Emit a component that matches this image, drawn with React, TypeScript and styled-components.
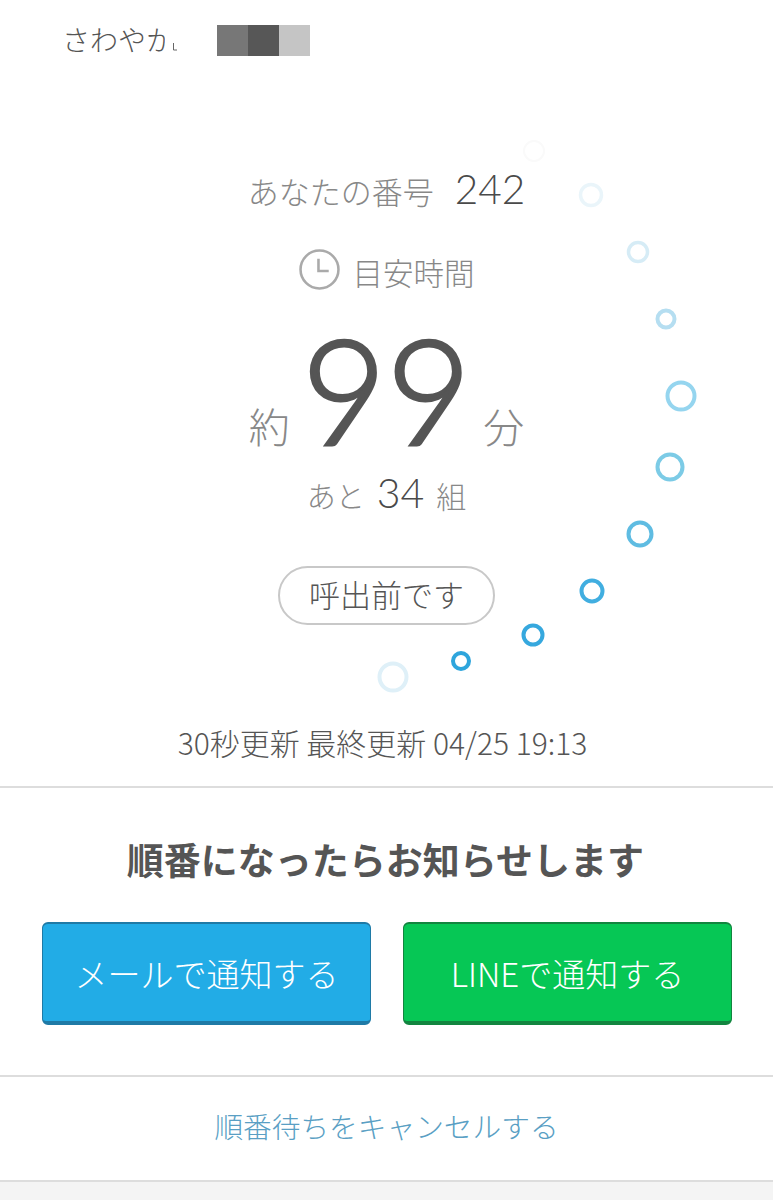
import React from 'react';
import styled, { createGlobalStyle } from 'styled-components';

const GlobalStyle = createGlobalStyle`
  html, body {
    margin: 0;
    padding: 0;
    background: #f4f4f4;
  }
  body {
    font-family: "Noto Sans CJK JP", "Noto Sans", sans-serif;
  }
`;

const Page = styled.div`
  width: 773px;
  height: 1200px;
  overflow: hidden;
  background: #f4f4f4;
`;

const Header = styled.div`
  height: 80px;
  padding: 25px 0 0 62px;
  box-sizing: border-box;
  display: flex;
  align-items: flex-start;
  background: #fff;
`;

const ShopName = styled.div`
  width: 155px;
  display: flex;
  align-items: flex-start;
`;

const ShopNameText = styled.div`
  width: 103px;
  overflow: hidden;
  white-space: nowrap;
  font-size: 28px;
  line-height: 28px;
  color: #555;
  font-weight: 300;
`;

const ClippedMark = styled.svg`
  width: 6px;
  height: 26px;
  margin-left: 7px;
`;

const Mosaic = styled.div`
  display: flex;
`;

const MosaicCell = styled.div<{ $c: string }>`
  width: 31px;
  height: 31px;
  background: ${p => p.$c};
`;

const Status = styled.section`
  position: relative;
  height: 708px;
  box-sizing: border-box;
  padding-top: 86px;
  background: #fff;
  border-bottom: 2px solid #ddd;
  display: flex;
  flex-direction: column;
  align-items: center;
`;

const Spinner = styled.svg`
  position: absolute;
  left: 0;
  top: 0;
  width: 773px;
  height: 705px;
`;

const NumberRow = styled.div`
  display: flex;
  align-items: baseline;
  gap: 21px;
  height: 46px;
  line-height: 46px;
`;

const Label = styled.span<{ $size: number }>`
  font-size: ${p => p.$size}px;
  color: #888;
  font-weight: 300;
`;

const Figure = styled.span<{ $size: number }>`
  font-family: "Lato", "Noto Sans", sans-serif;
  font-size: ${p => p.$size}px;
  color: #4a4a4a;
  font-weight: 300;
`;

const TimeRow = styled.div`
  margin-top: 38px;
  height: 44px;
  display: flex;
  align-items: center;
  gap: 13px;
  font-size: 30.5px;
  font-weight: 300;
  color: #888;
`;

const ClockIcon = styled.svg`
  width: 41px;
  height: 41px;
  margin-top: -6px;
`;

const WaitRow = styled.div`
  height: 130px;
  margin-top: 30px;
  display: flex;
  align-items: flex-end;
  gap: 12px;
`;

const Unit = styled.span`
  font-size: 41px;
  line-height: 54px;
  margin-bottom: 2px;
  color: #888;
  font-weight: 300;
`;

const BigNumber = styled.span`
  font-family: "Lato", "Noto Sans", sans-serif;
  font-size: 146px;
  line-height: 130px;
  font-weight: 300;
  -webkit-text-stroke: 3px #555;
  color: #555;
`;

const RemainRow = styled.div`
  margin-top: 12px;
  height: 54px;
  display: flex;
  align-items: baseline;
  gap: 12px;
  line-height: 54px;
`;

const Pill = styled.div`
  margin-top: 46px;
  width: 217px;
  height: 59px;
  box-sizing: border-box;
  padding-bottom: 5px;
  border: 2px solid #c8c8c8;
  border-radius: 30px;
  display: flex;
  align-items: center;
  justify-content: center;
  font-size: 31px;
  font-weight: 300;
  color: #555;
`;

const Updated = styled.div`
  margin: 97px 8px 0 0;
  font-size: 30px;
  line-height: 40px;
  font-weight: 300;
  color: #555;
`;

const Notify = styled.section`
  height: 289px;
  box-sizing: border-box;
  padding: 45px 41px 0 42px;
  background: #fff;
  border-bottom: 2px solid #ddd;
`;

const NotifyTitle = styled.h2`
  margin: 0 3px 0 0;
  text-align: center;
  font-size: 37px;
  line-height: 52px;
  font-weight: 700;
  color: #555;
`;

const ButtonRow = styled.div`
  margin-top: 37px;
  display: grid;
  grid-template-columns: 329px 329px;
  column-gap: 32px;
`;

const NotifyButton = styled.button<{ $bg: string; $edge: string }>`
  height: 103px;
  padding: 0;
  border: 1px solid ${p => p.$edge};
  border-top-width: 2px;
  border-bottom-width: 4px;
  border-radius: 6px;
  background: ${p => p.$bg};
  color: #fff;
  font-family: inherit;
  font-size: 33px;
  font-weight: 300;
`;

const Cancel = styled.section`
  height: 105px;
  box-sizing: border-box;
  padding-bottom: 6px;
  background: #fff;
  border-bottom: 2px solid #ddd;
  display: flex;
  align-items: center;
  justify-content: center;
  font-size: 28.7px;
  color: #5a9fc4;
  font-weight: 300;
`;

const rings = [
  { x: 534, y: 151, r: 10, w: 2, c: '#fafafa' },
  { x: 591, y: 195, r: 10.5, w: 3.5, c: '#eaf5fa' },
  { x: 638, y: 252, r: 9.5, w: 3.5, c: '#d6ecf6' },
  { x: 666, y: 319, r: 8.5, w: 4, c: '#b5def1' },
  { x: 681, y: 396, r: 13.5, w: 4, c: '#95d5ef' },
  { x: 670, y: 467, r: 12.5, w: 4, c: '#7ccbe6' },
  { x: 640, y: 534, r: 11.5, w: 4, c: '#5fbce2' },
  { x: 592, y: 591, r: 10.5, w: 4, c: '#41aee0' },
  { x: 533, y: 635, r: 9.5, w: 4, c: '#36a8de' },
  { x: 461, y: 661, r: 8, w: 4, c: '#2ea5dc' },
  { x: 393, y: 677, r: 13.5, w: 4, c: '#dff0f8' }
];

export default function App() {
  return (
    <Page>
      <GlobalStyle />
      <Header>
        <ShopName>
          <ShopNameText>さわやか</ShopNameText>
          <ClippedMark viewBox="0 0 6 26">
            <path d="M1.5 18V25H5" fill="none" stroke="#666" strokeWidth="1" />
          </ClippedMark>
        </ShopName>
        <Mosaic>
          <MosaicCell $c="#777" />
          <MosaicCell $c="#575757" />
          <MosaicCell $c="#c5c5c5" />
        </Mosaic>
      </Header>
      <Status>
        <Spinner viewBox="0 80 773 705">
          {rings.map(d => (
            <circle key={d.x} cx={d.x} cy={d.y} r={d.r} fill="none" stroke={d.c} strokeWidth={d.w} />
          ))}
        </Spinner>
        <NumberRow>
          <Label $size={31}>あなたの番号</Label>
          <Figure $size={40.5}>242</Figure>
        </NumberRow>
        <TimeRow>
          <ClockIcon viewBox="0 0 40 40" fill="none" stroke="#aaa">
            <circle cx="20" cy="20" r="18.5" strokeWidth="2.5" />
            <path d="M19 9.5V21.5H29" strokeWidth="2.5" />
          </ClockIcon>
          目安時間
        </TimeRow>
        <WaitRow>
          <Unit>約</Unit>
          <BigNumber>99</BigNumber>
          <Unit>分</Unit>
        </WaitRow>
        <RemainRow>
          <Label $size={29}>あと</Label>
          <Figure $size={41}>34</Figure>
          <Label $size={30}>組</Label>
        </RemainRow>
        <Pill>呼出前です</Pill>
        <Updated>30秒更新 最終更新 04/25 19:13</Updated>
      </Status>
      <Notify>
        <NotifyTitle>順番になったらお知らせします</NotifyTitle>
        <ButtonRow>
          <NotifyButton $bg="#22ace6" $edge="#1f7aa6">メールで通知する</NotifyButton>
          <NotifyButton $bg="#06c755" $edge="#12853f">LINEで通知する</NotifyButton>
        </ButtonRow>
      </Notify>
      <Cancel>順番待ちをキャンセルする</Cancel>
    </Page>
  );
}
